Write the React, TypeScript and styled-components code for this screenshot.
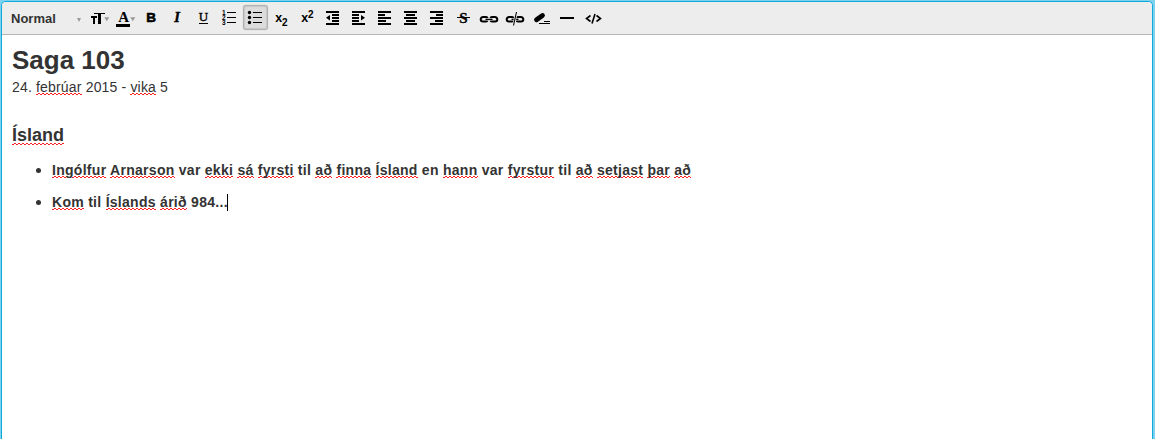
import React from "react";
import styled, { createGlobalStyle } from "styled-components";

const Global = createGlobalStyle`
  body { margin: 0; background: #7fd2ef; overflow: hidden; }
  * { box-sizing: border-box; }
`;

const Editor = styled.main`
  height: 438px;
  margin: 1px 2px 0 1px;
  border: 1px solid #0fa9da;
  border-bottom: 0;
  border-radius: 5px 5px 0 0;
  overflow: hidden;
  background: #fff;
  color: #333;
  font-family: "Liberation Sans", Arial, sans-serif;
`;

const Toolbar = styled.div`
  display: flex;
  height: 33px;
  padding: 3px 0 0 9px;
  background: #ededed;
  border-bottom: 1px solid #b6b6b6;
`;

const FormatSelect = styled.div`
  display: flex;
  align-items: center;
  justify-content: space-between;
  width: 70px;
  height: 26px;
  margin-right: 6px;
  padding-top: 1px;
  font-size: 13px;
  font-weight: bold;
  color: #333;
`;

const Arrow = styled.i`
  border: 2.5px solid transparent;
  border-top: 4px solid #999;
  border-bottom: 0;
  margin-top: 2px;
`;

const Tool = styled.button<{ $active?: boolean }>`
  width: 25px;
  height: 25px;
  margin: 0 1px 0 0;
  padding: 0;
  border: 1px solid ${(p) => (p.$active ? "#b3b3b3" : "transparent")};
  border-radius: 3px;
  background: ${(p) => (p.$active ? "#dcdcdc" : "transparent")};
  box-shadow: ${(p) => (p.$active ? "inset 0 0 1px 1px #c6c6c6, 0 0 1px #aaa" : "none")};

  svg {
    display: block;
    width: 24px;
    height: 24px;
    margin-left: -1px;
    overflow: visible;
  }
`;

const Page = styled.article`
  padding: 10px;
  font-size: 14px;
`;

const Title = styled.h1`
  margin: 0;
  font-size: 26px;
  line-height: 30px;
`;

const DateLine = styled.p`
  margin: 2px 0 0;
  line-height: 20px;
  letter-spacing: 0.17px;
`;

const Heading = styled.h2`
  margin: 26px 0 0;
  font-size: 18px;
  line-height: 24px;
`;

const List = styled.ul`
  margin: 13px 0 0;
  padding-left: 40px;
  list-style: none;
`;

const Item = styled.li`
  height: 20px;
  margin-bottom: 12px;
  line-height: 20px;
  font-weight: bold;
  letter-spacing: 0.285px;

  &::before {
    content: "";
    display: inline-block;
    width: 5px;
    height: 5px;
    margin: 0 11px 0 -16px;
    border-radius: 50%;
    background: #333;
    vertical-align: 2px;
  }
`;

const Misspelled = styled.span`
  background-image: linear-gradient(90deg, #ff2020 50%, transparent 50%),
    linear-gradient(90deg, transparent 50%, #ff2020 50%);
  background-size: 4px 1px, 4px 1px;
  background-position: 0 100%, 0 calc(100% - 1px);
  background-repeat: repeat-x;
`;

const Caret = styled.span`
  display: inline-block;
  width: 1px;
  height: 17px;
  margin-left: -1px;
  vertical-align: -4px;
  background: #000;
`;

type Segment = string | [string];

const lines: Segment[][] = [
  [["Ingólfur"], " ", ["Arnarson"], " var ", ["ekki"], " ", ["sá"], " ", ["fyrsti"], " til ", ["að"], " ", ["finna"], " ", ["Ísland"], " en ", ["hann"], " var ", ["fyrstur"], " til ", ["að"], " ", ["setjast"], " ", ["þar"], " ", ["að"]],
  [["Kom"], " til ", ["Íslands"], " ", ["árið"], " 984..."],
];

const Text = ({ parts }: { parts: Segment[] }) => (
  <>
    {parts.map((p, i) =>
      typeof p === "string" ? <React.Fragment key={i}>{p}</React.Fragment> : <Misspelled key={i}>{p[0]}</Misspelled>
    )}
  </>
);

const serif = { fontFamily: "'Liberation Serif', serif", textAnchor: "middle" as const };
const sans = { fontFamily: "'Liberation Sans', sans-serif" };

/* Rows of bars, each given as [x, y, width, height]. */
const Bars = ({ rows }: { rows: number[][] }) => (
  <g shapeRendering="crispEdges">
    {rows.map(([x, y, w, h], i) => (
      <rect key={i} x={x} y={y} width={w} height={h} />
    ))}
  </g>
);

const Drop = () => <path d="M17.300 11.300h5l-2.500 4z" fill="#999" />;

const Chain = () => (
  <g fill="none" stroke="#000" strokeWidth="2">
    <path d="M10.500 12Q10.300 11 9 11H6a2.300 2.300 0 0 0 0 4.600H9Q10.300 15.600 10.500 14.600M13.500 12Q13.700 11 15 11h3a2.300 2.300 0 0 1 0 4.600H15Q13.700 15.600 13.500 14.600" />
    <path d="M8.500 13.300h7" strokeWidth="1.200" />
  </g>
);

const tools: { name: string; active?: boolean; icon: React.ReactNode }[] = [
  { name: "Font size", icon: <><Bars rows={[[4, 10, 6, 2], [6, 10, 2, 8], [7, 7, 11, 1], [11, 7, 3, 11]]} /><Drop /></> },
  { name: "Text colour", icon: <><text x="10.600" y="16" fontSize="15" fontWeight="bold" {...serif}>A</text><Bars rows={[[3, 18, 14, 3]]} /><Drop /></> },
  { name: "Bold", icon: <text x="12.200" y="16" fontSize="13.500" fontWeight="bold" stroke="#000" strokeWidth=".6" textAnchor="middle" {...sans}>B</text> },
  { name: "Italic", icon: <text x="12.200" y="16" fontSize="14.500" fontWeight="bold" fontStyle="italic" stroke="#000" strokeWidth=".4" {...serif}>I</text> },
  { name: "Underline", icon: <><text x="12.500" y="15.200" fontSize="13" stroke="#000" strokeWidth=".4" {...serif}>U</text><Bars rows={[[8, 17, 9, 1]]} /></> },
  { name: "Numbered list", icon: <><g fontSize="6.500" fontWeight="bold" {...sans}><text x="5" y="9">1</text><text x="5" y="14">2</text><text x="5" y="19">3</text></g><Bars rows={[[10, 6, 9, 1], [10, 11, 9, 1], [10, 16, 9, 1]]} /></> },
  { name: "Bulleted list", active: true, icon: <><circle cx="6.500" cy="6.500" r="1.700" /><circle cx="6.500" cy="11.500" r="1.700" /><circle cx="6.500" cy="16.500" r="1.700" /><Bars rows={[[10, 6, 9, 1], [10, 11, 9, 1], [10, 16, 9, 1]]} /></> },
  { name: "Subscript", icon: <g fontWeight="bold" {...sans}><text x="6.300" y="15.700" fontSize="12.500">x</text><text x="13" y="19.700" fontSize="10">2</text></g> },
  { name: "Superscript", icon: <g fontWeight="bold" {...sans}><text x="6.300" y="15.700" fontSize="12.500">x</text><text x="13" y="12" fontSize="10">2</text></g> },
  { name: "Outdent", icon: <><Bars rows={[[5, 5, 13, 2], [11, 8, 7, 2], [11, 11, 7, 2], [11, 14, 7, 2], [5, 17, 13, 2]]} /><path d="M9 9v5.500l-4-2.750z" /></> },
  { name: "Indent", icon: <><Bars rows={[[5, 5, 13, 2], [5, 8, 7, 2], [5, 11, 7, 2], [5, 14, 7, 2], [5, 17, 13, 2]]} /><path d="M14 9v5.500l4-2.750z" /></> },
  { name: "Align left", icon: <Bars rows={[[5, 5, 13, 2], [5, 8, 7, 2], [5, 11, 13, 2], [5, 14, 8, 2], [5, 17, 13, 2]]} /> },
  { name: "Align centre", icon: <Bars rows={[[5, 5, 13, 2], [7, 8, 9, 2], [5, 11, 13, 2], [7, 14, 9, 2], [5, 17, 13, 2]]} /> },
  { name: "Align right", icon: <Bars rows={[[5, 5, 13, 2], [11, 8, 7, 2], [5, 11, 13, 2], [10, 14, 8, 2], [5, 17, 13, 2]]} /> },
  { name: "Strikethrough", icon: <><text x="12.400" y="16.500" fontSize="15" fontWeight="bold" stroke="#000" strokeWidth=".3" {...serif}>S</text><Bars rows={[[6, 11, 13, 1]]} /></> },
  { name: "Link", icon: <Chain /> },
  { name: "Unlink", icon: <><Chain /><path d="M13 8.500l-2 9" stroke="#ededed" strokeWidth="2.400" /><path d="M13.500 6l-3 13.500" stroke="#000" strokeWidth="1.100" /></> },
  { name: "Clear formatting", icon: <><path d="M7.500 13.800l6-4.300" stroke="#000" strokeWidth="4.800" strokeLinecap="round" /><Bars rows={[[10, 17, 11, 1], [15, 15, 6, 1]]} /></> },
  { name: "Horizontal rule", icon: <Bars rows={[[5, 11, 14, 2]]} /> },
  { name: "Source", icon: <path d="M9.500 9.500L5.500 12.500l4 3M15.500 9.500l4 3-4 3M14 8l-3 9.500" fill="none" stroke="#000" strokeWidth="1.600" /> },
];

export default function App() {
  return (
    <>
      <Global />
      <Editor>
        <Toolbar>
          <FormatSelect>
            Normal
            <Arrow />
          </FormatSelect>
          {tools.map((t) => (
            <Tool key={t.name} aria-label={t.name} $active={t.active}>
              <svg viewBox="0 0 24 24">{t.icon}</svg>
            </Tool>
          ))}
        </Toolbar>
        <Page>
          <Title>Saga 103</Title>
          <DateLine>
            <Text parts={["24. ", ["febrúar"], " 2015 - ", ["vika"], " 5"]} />
          </DateLine>
          <Heading>
            <Misspelled>Ísland</Misspelled>
          </Heading>
          <List>
            {lines.map((parts, i) => (
              <Item key={i}>
                <Text parts={parts} />
                {i === 1 && <Caret />}
              </Item>
            ))}
          </List>
        </Page>
      </Editor>
    </>
  );
}
